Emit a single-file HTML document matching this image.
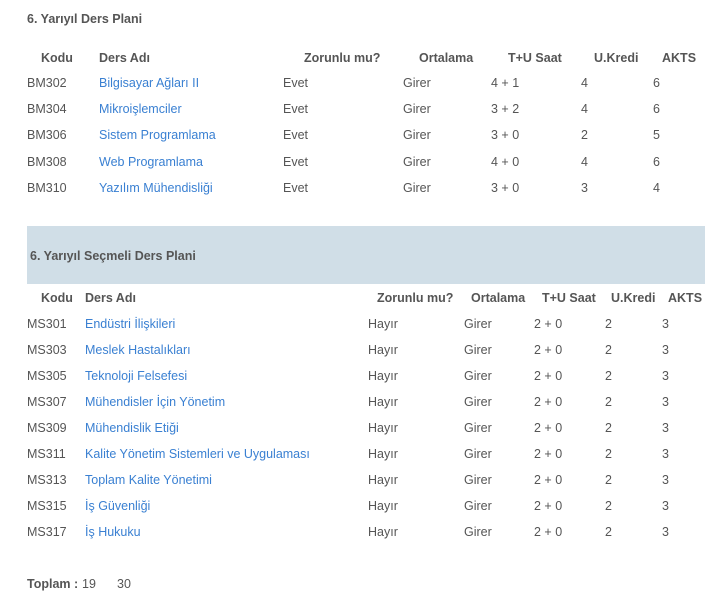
<!DOCTYPE html>
<html><head><meta charset="utf-8"><style>
html,body{margin:0;padding:0;background:#fff;width:720px;height:605px;overflow:hidden;position:relative}
body{font-family:"Liberation Sans","DejaVu Sans",sans-serif;font-size:12.5px;color:#555}
.t{position:absolute;line-height:16px;white-space:nowrap}
.b{font-weight:bold;color:#555}
.l{color:#3a80d2}
.band{position:absolute;left:27px;top:226px;width:678px;height:58px;background:#d0dee7}
</style></head><body>
<div class="band"></div>
<div id="c"></div>
<script>
var c=document.getElementById('c'),h='';
function T(x,y,s,cl){h+='<div class="t '+(cl||'')+'" style="left:'+x+'px;top:'+(y-7)+'px">'+s+'</div>';}
T(27,18,'6. Yarıyıl Ders Plani','b');
[[41,'Kodu'],[99,'Ders Adı'],[304,'Zorunlu mu?'],[419,'Ortalama'],[508,'T+U Saat'],[594,'U.Kredi'],[662,'AKTS']].forEach(function(a){T(a[0],57,a[1],'b')});
var r1=[['BM302','Bilgisayar Ağları II','4 + 1','4','6'],['BM304','Mikroişlemciler','3 + 2','4','6'],['BM306','Sistem Programlama','3 + 0','2','5'],['BM308','Web Programlama','4 + 0','4','6'],['BM310','Yazılım Mühendisliği','3 + 0','3','4']];
r1.forEach(function(r,i){var y=82+i*26.2;T(27,y,r[0]);T(99,y,r[1],'l');T(283,y,'Evet');T(403,y,'Girer');T(491,y,r[2]);T(581,y,r[3]);T(653,y,r[4]);});
T(30,255,'6. Yarıyıl Seçmeli Ders Plani','b');
[[41,'Kodu'],[85,'Ders Adı'],[377,'Zorunlu mu?'],[471,'Ortalama'],[542,'T+U Saat'],[611,'U.Kredi'],[668,'AKTS']].forEach(function(a){T(a[0],297,a[1],'b')});
var r2=[['MS301','Endüstri İlişkileri'],['MS303','Meslek Hastalıkları'],['MS305','Teknoloji Felsefesi'],['MS307','Mühendisler İçin Yönetim'],['MS309','Mühendislik Etiği'],['MS311','Kalite Yönetim Sistemleri ve Uygulaması'],['MS313','Toplam Kalite Yönetimi'],['MS315','İş Güvenliği'],['MS317','İş Hukuku']];
r2.forEach(function(r,i){var y=323+i*26;T(27,y,r[0]);T(85,y,r[1],'l');T(368,y,'Hayır');T(464,y,'Girer');T(534,y,'2 + 0');T(605,y,'2');T(662,y,'3');});
T(27,583,'Toplam :','b');T(82,583,'19');T(117,583,'30');
c.innerHTML=h;
</script>
</body></html>
